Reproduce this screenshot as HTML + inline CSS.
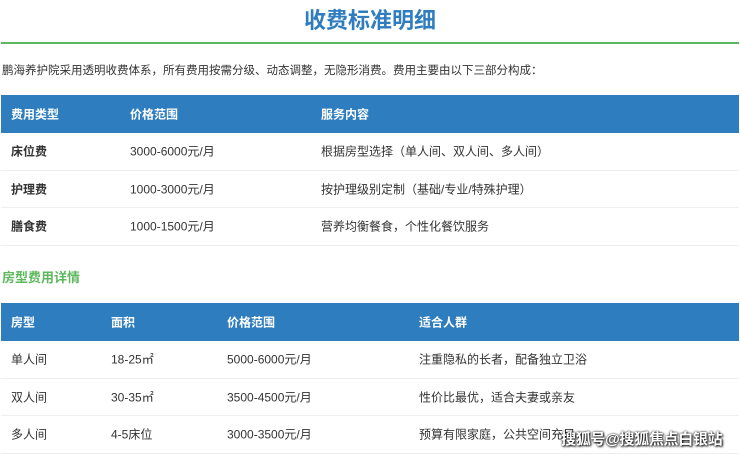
<!DOCTYPE html>
<html><head><meta charset="utf-8"><style>
*{margin:0;padding:0;box-sizing:border-box}
body{width:740px;height:455px;overflow:hidden;background:#fff;font-family:"Liberation Sans","Noto Sans CJK SC",sans-serif;color:#333;position:relative}
.t{position:absolute;top:5px;left:0;width:740px;text-align:center;font-size:22px;font-weight:bold;color:#2f7dbf;line-height:32px}
.line{position:absolute;top:42px;left:1px;width:738px;height:2px;background:#5cb85c}
.intro{position:absolute;top:63px;left:2px;font-size:11.5px;line-height:16px;color:#333}
.tb{position:absolute;left:1px;width:738px}
.h{background:#2e7dbe;color:#fff;font-weight:bold;font-size:12px;height:38px;position:relative}
.r{height:37.5px;border-bottom:1.5px solid #eee;position:relative;font-size:12px}
.h span,.r span{position:absolute;top:50%;transform:translateY(-50%);white-space:nowrap}
.b{font-weight:bold}
.sec{position:absolute;top:267px;left:2px;font-size:13px;font-weight:bold;color:#5cb85c}
.wm{position:absolute;left:561px;top:428px;font-size:15px;letter-spacing:-0.3px;font-weight:bold;color:#fff;text-shadow:0 0 2px #000,1px 1px 2px #000;white-space:nowrap}
</style></head><body>
<div class="t">收费标准明细</div>
<div class="line"></div>
<div class="intro">鹏海养护院采用透明收费体系，所有费用按需分级、动态调整，无隐形消费。费用主要由以下三部分构成：</div>
<div class="tb" style="top:95px">
<div class="h"><span style="left:10px">费用类型</span><span style="left:129px">价格范围</span><span style="left:320px">服务内容</span></div>
<div class="r"><span class="b" style="left:10px">床位费</span><span style="left:129px">3000-6000元/月</span><span style="left:320px">根据房型选择（单人间、双人间、多人间）</span></div>
<div class="r"><span class="b" style="left:10px">护理费</span><span style="left:129px">1000-3000元/月</span><span style="left:320px">按护理级别定制（基础/专业/特殊护理）</span></div>
<div class="r"><span class="b" style="left:10px">膳食费</span><span style="left:129px">1000-1500元/月</span><span style="left:320px">营养均衡餐食，个性化餐饮服务</span></div>
</div>
<div class="sec">房型费用详情</div>
<div class="tb" style="top:303px">
<div class="h"><span style="left:10px">房型</span><span style="left:110px">面积</span><span style="left:226px">价格范围</span><span style="left:418px">适合人群</span></div>
<div class="r"><span style="left:10px">单人间</span><span style="left:110px">18-25㎡</span><span style="left:226px">5000-6000元/月</span><span style="left:418px">注重隐私的长者，配备独立卫浴</span></div>
<div class="r"><span style="left:10px">双人间</span><span style="left:110px">30-35㎡</span><span style="left:226px">3500-4500元/月</span><span style="left:418px">性价比最优，适合夫妻或亲友</span></div>
<div class="r"><span style="left:10px">多人间</span><span style="left:110px">4-5床位</span><span style="left:226px">3000-3500元/月</span><span style="left:418px">预算有限家庭，公共空间充足</span></div>
</div>
<div class="wm">搜狐号@搜狐焦点白银站</div>
</body></html>
